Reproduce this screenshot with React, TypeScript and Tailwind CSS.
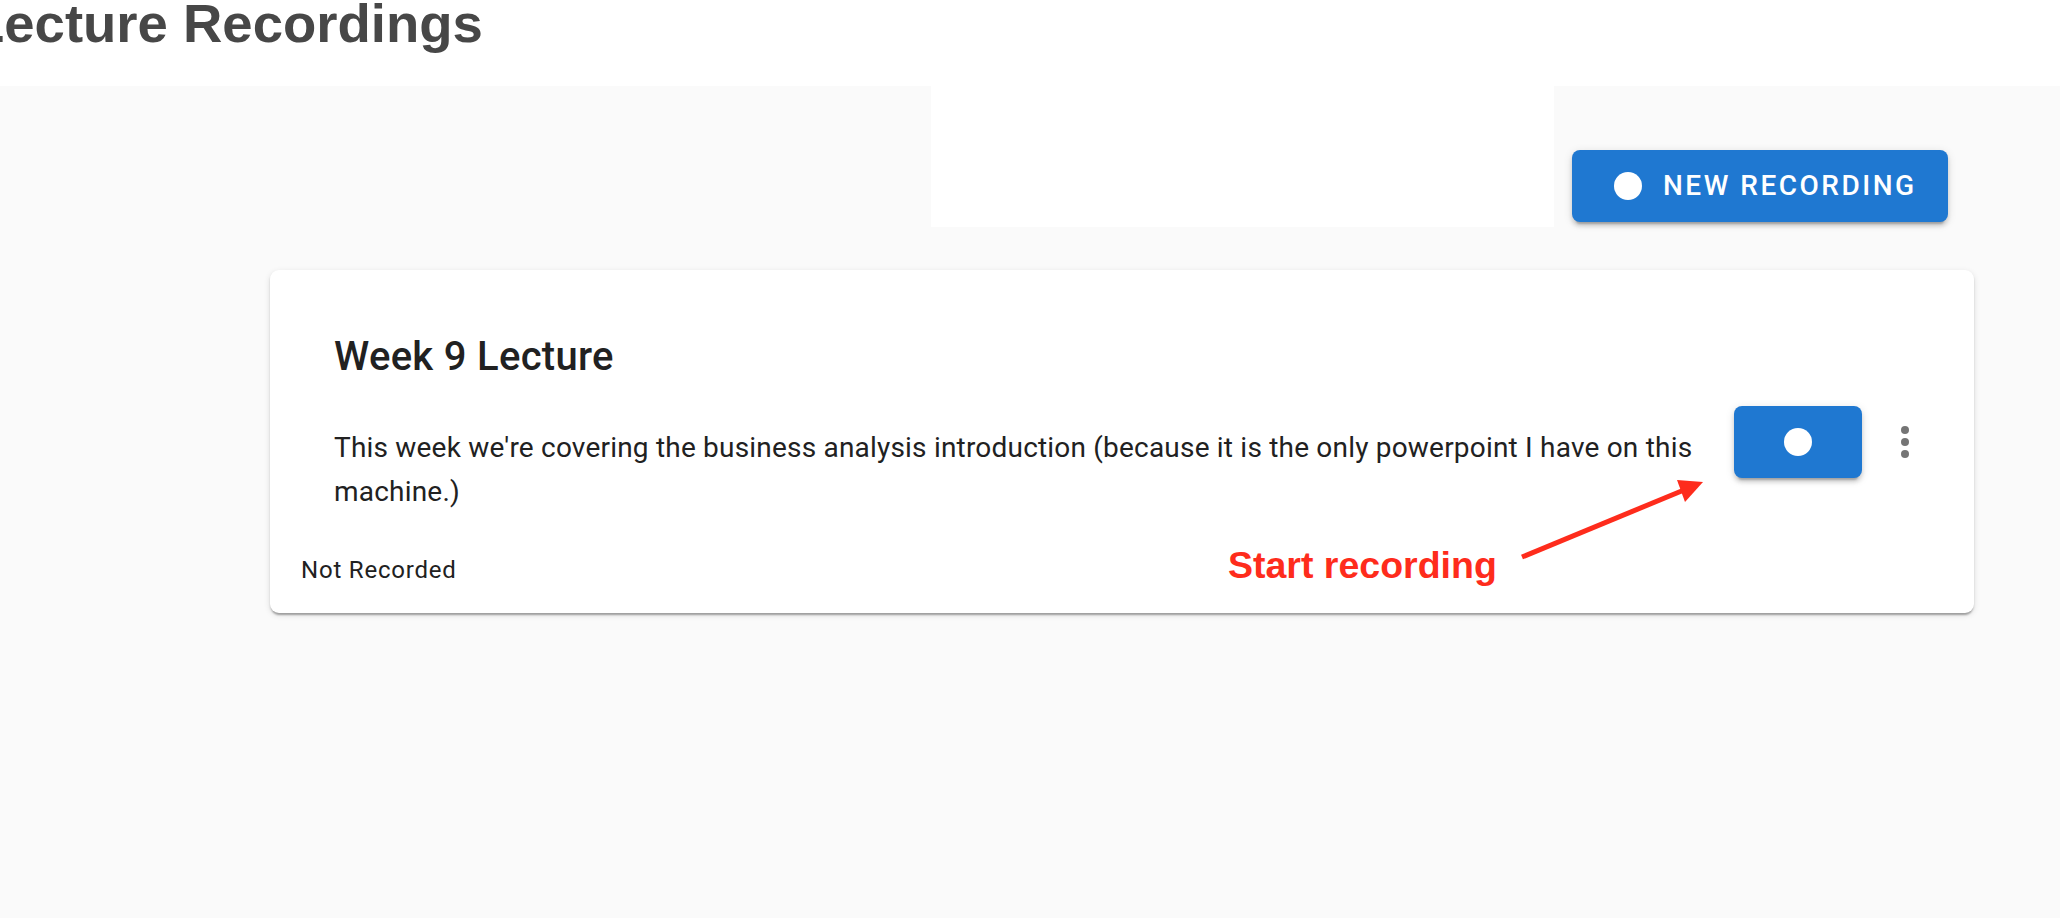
import React from "react";

export default function App() {
  return (
    <div className="relative w-[2060px] h-[918px] overflow-hidden bg-[#fafafa] font-[Roboto,sans-serif]">
      <header className="h-[86px] bg-white">
        <h1 className="-ml-[29px] text-[54.5px] leading-[48px] font-bold text-[#474747] font-['Liberation_Sans',Arial,sans-serif] whitespace-nowrap">
          Lecture Recordings
        </h1>
      </header>

      <main>
        <div className="flex items-end h-[141px]">
          <div className="ml-[931px] w-[623px] h-[141px] bg-white" />
          <button className="ml-[18px] mb-[5px] w-[376px] h-[72px] flex items-center pl-[42px] rounded-[8px] bg-[#1f78d1] text-white shadow-[0_6px_2px_-4px_rgba(0,0,0,0.2),0_4px_4px_0_rgba(0,0,0,0.14),0_2px_10px_0_rgba(0,0,0,0.12)]">
            <span className="w-[28px] h-[28px] rounded-full bg-white shrink-0" />
            <span className="ml-[21px] text-[28px] leading-[32px] font-medium tracking-[2.5px] whitespace-nowrap">
              NEW RECORDING
            </span>
          </button>
        </div>

        <div className="ml-[270px] mt-[43px] w-[1704px] h-[343px] bg-white rounded-[9px] shadow-[0_4px_2px_-2px_rgba(0,0,0,0.2),0_2px_2px_0_rgba(0,0,0,0.14),0_2px_6px_0_rgba(0,0,0,0.12)]">
          <div className="flex">
            <div className="pl-[64px] pt-[63px] w-[1464px] shrink-0">
              <h2 className="text-[40px] leading-[48px] font-medium text-[#212121] tracking-[0.3px]">
                Week 9 Lecture
              </h2>
              <p className="mt-[45px] text-[28px] leading-[44px] tracking-[0.2px] text-[#212121]">
                This week we're covering the business analysis introduction (because it is the only powerpoint I have on this machine.)
              </p>
            </div>
            <div className="pt-[136px] flex items-start">
              <div className="flex items-center">
                <button className="w-[128px] h-[72px] flex items-center justify-center rounded-[8px] bg-[#1f78d1] shadow-[0_6px_2px_-4px_rgba(0,0,0,0.2),0_4px_4px_0_rgba(0,0,0,0.14),0_2px_10px_0_rgba(0,0,0,0.12)]">
                  <span className="w-[28px] h-[28px] rounded-full bg-white" />
                </button>
                <div className="ml-[39px] flex flex-col gap-[4px]">
                  <span className="w-[8px] h-[8px] rounded-full bg-[#757575]" />
                  <span className="w-[8px] h-[8px] rounded-full bg-[#757575]" />
                  <span className="w-[8px] h-[8px] rounded-full bg-[#757575]" />
                </div>
              </div>
            </div>
          </div>
          <div className="pl-[31px] mt-[36px] text-[24px] leading-[40px] tracking-[0.8px] text-[#212121]">
            Not Recorded
          </div>
        </div>
      </main>

      <div className="absolute left-[1228px] top-[546px] text-[37.5px] leading-[38px] font-bold text-[#fe2c1c] font-['Liberation_Sans',Arial,sans-serif] whitespace-nowrap">
        Start recording
      </div>
      <svg className="absolute left-0 top-0 pointer-events-none" width="2060" height="918" viewBox="0 0 2060 918">
        <line x1="1522" y1="557" x2="1684" y2="490" stroke="#fe2c1c" strokeWidth="5" />
        <polygon points="1703,482 1677,480 1685,502" fill="#fe2c1c" />
      </svg>
    </div>
  );
}
